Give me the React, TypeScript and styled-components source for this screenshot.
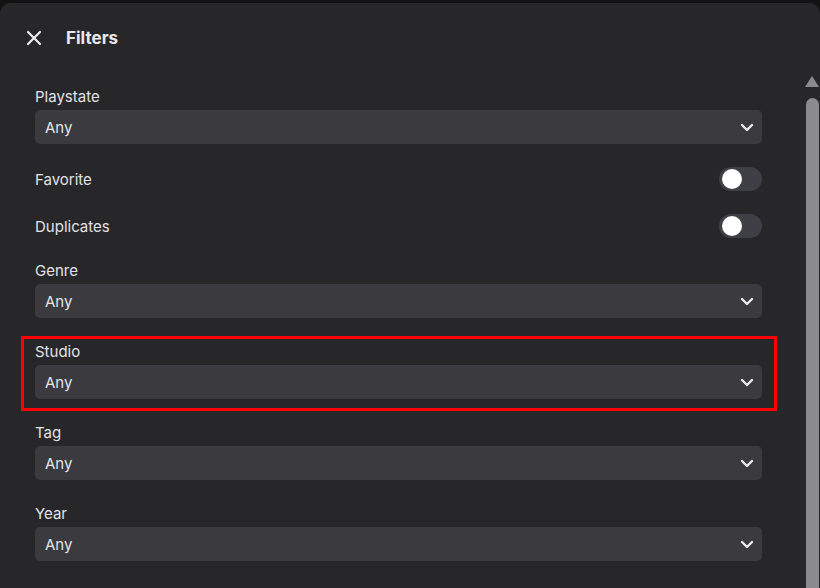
import React, { useState } from "react";
import styled, { createGlobalStyle } from "styled-components";

const GlobalStyle = createGlobalStyle`
  html, body {
    margin: 0;
    height: 100%;
    overflow: hidden;
    background: #121212;
  }
  #root {
    height: 100%;
  }
  * {
    box-sizing: border-box;
  }
`;

const Panel = styled.div`
  margin-top: 3px;
  height: calc(100% - 3px);
  background-color: #27272a;
  border-radius: 10px 10px 0 0;
  display: flex;
  flex-direction: column;
  font-family: Inter, "Noto Sans", sans-serif;
  color: #e4e4e7;
`;

const Header = styled.div`
  height: 70px;
  flex-shrink: 0;
  display: flex;
  align-items: center;
  gap: 24px;
  padding-left: 26px;
`;

const CloseButton = styled.button`
  width: 16px;
  height: 16px;
  padding: 0;
  border: none;
  background: none;
  color: #ececee;
  display: flex;
  align-items: center;
  justify-content: center;
  cursor: pointer;
`;

const Title = styled.h2`
  margin: 0;
  font-size: 17px;
  font-weight: 700;
  color: #e8e8ea;
`;

const Body = styled.div`
  flex: 1;
  display: flex;
  min-height: 0;
`;

const Content = styled.div`
  flex: 1;
  padding: 14px 38px 0 35px;
  display: flex;
  flex-direction: column;
  gap: 23px;
`;

const Rail = styled.div`
  width: 20px;
  flex-shrink: 0;
  display: flex;
  flex-direction: column;
  align-items: center;
  padding: 3px 1px 0 5px;
`;

const RailArrow = styled.div`
  width: 0;
  height: 0;
  border-left: 7px solid transparent;
  border-right: 7px solid transparent;
  border-bottom: 11px solid #8b8b8d;
`;

const RailThumb = styled.div`
  margin-top: 11px;
  width: 13px;
  flex: 1;
  background-color: #8b8b8d;
  border-radius: 7px 7px 0 0;
`;

const Field = styled.div<{ $highlight?: boolean }>`
  position: relative;
  display: flex;
  flex-direction: column;

  & + & {
    margin-top: 1px;
  }

  ${(p) =>
    p.$highlight &&
    `
    &::after {
      content: "";
      position: absolute;
      top: -6px;
      left: -14px;
      right: -15px;
      bottom: -12px;
      border: 3px solid #ff0000;
      pointer-events: none;
    }
  `}
`;

const Label = styled.label`
  font-size: 15px;
  line-height: 19px;
  margin-bottom: 4px;
  color: #e2e2e5;
`;

const Select = styled.div`
  height: 34px;
  background-color: #3a3a3f;
  border-radius: 5px;
  display: flex;
  align-items: center;
  justify-content: space-between;
  padding: 0 8px 0 10px;
  font-size: 15px;
  color: #e4e4e7;
  cursor: pointer;
`;

const ToggleRow = styled.div`
  height: 24px;
  display: flex;
  align-items: center;
  justify-content: space-between;
  font-size: 15px;
  color: #e2e2e5;
`;

const ToggleTrack = styled.button<{ $on: boolean }>`
  width: 43px;
  height: 24px;
  border: none;
  padding: 2px 3px;
  border-radius: 12px;
  background-color: ${(p) => (p.$on ? "#7c3aed" : "#3f3f46")};
  display: flex;
  justify-content: ${(p) => (p.$on ? "flex-end" : "flex-start")};
  align-items: center;
  cursor: pointer;
`;

const ToggleKnob = styled.span`
  width: 20px;
  height: 20px;
  border-radius: 50%;
  background-color: #ffffff;
`;

const Chevron = () => (
  <svg width="14" height="9" viewBox="0 0 14 9" fill="none">
    <path
      d="M2 2 L7 7 L12 2"
      stroke="#ececee"
      strokeWidth="2.4"
      strokeLinecap="round"
      strokeLinejoin="round"
    />
  </svg>
);

const SelectField = ({ label, highlight }: { label: string; highlight?: boolean }) => (
  <Field $highlight={highlight}>
    <Label>{label}</Label>
    <Select>
      <span>Any</span>
      <Chevron />
    </Select>
  </Field>
);

const Toggle = ({ label }: { label: string }) => {
  const [on, setOn] = useState(false);
  return (
    <ToggleRow>
      <span>{label}</span>
      <ToggleTrack $on={on} onClick={() => setOn(!on)}>
        <ToggleKnob />
      </ToggleTrack>
    </ToggleRow>
  );
};

export default function App() {
  return (
    <>
      <GlobalStyle />
      <Panel>
        <Header>
          <CloseButton aria-label="Close">
            <svg width="16" height="16" viewBox="0 0 16 16">
              <path
                d="M2 2 L14 14 M14 2 L2 14"
                stroke="currentColor"
                strokeWidth="2.2"
                strokeLinecap="round"
              />
            </svg>
          </CloseButton>
          <Title>Filters</Title>
        </Header>
        <Body>
          <Content>
            <SelectField label="Playstate" />
            <Toggle label="Favorite" />
            <Toggle label="Duplicates" />
            <SelectField label="Genre" />
            <SelectField label="Studio" highlight />
            <SelectField label="Tag" />
            <SelectField label="Year" />
          </Content>
          <Rail>
            <RailArrow />
            <RailThumb />
          </Rail>
        </Body>
      </Panel>
    </>
  );
}
